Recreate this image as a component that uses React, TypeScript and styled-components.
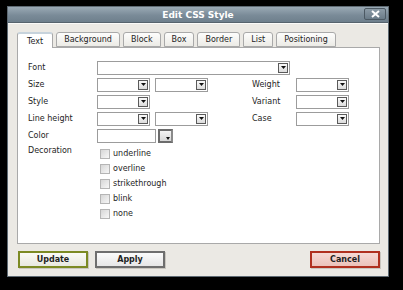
import styled, { createGlobalStyle } from "styled-components";

const GlobalStyle = createGlobalStyle`
  html, body {
    margin: 0;
    padding: 0;
    background: #000;
  }
  body {
    width: 403px;
    height: 290px;
    overflow: hidden;
    font-family: "DejaVu Sans", Verdana, sans-serif;
  }
`;

const tabs = ["Text", "Background", "Block", "Box", "Border", "List", "Positioning"];
const decorations = ["underline", "overline", "strikethrough", "blink", "none"];

export default function App() {
  return (
    <>
      <GlobalStyle />
      <Dialog>
        <TitleBar>
          <Title>Edit CSS Style</Title>
          <CloseButton>
            <svg width="9" height="8" viewBox="0 0 9 8">
              <path d="M1 1 L8 7 M8 1 L1 7" stroke="#fff" strokeWidth="2" />
            </svg>
          </CloseButton>
        </TitleBar>
        <Body>
          <TabStrip>
            {tabs.map((t, i) => (
              <Tab key={t} $active={i === 0}>
                {t}
              </Tab>
            ))}
          </TabStrip>
          <Panel>
            <Row>
              <Label>Font</Label>
              <TextField $width={193}>
                <ArrowBox />
              </TextField>
            </Row>
            <Row>
              <Label>Size</Label>
              <Controls>
                <Select />
                <Select />
              </Controls>
              <SideLabel>Weight</SideLabel>
              <Select />
            </Row>
            <Row>
              <Label>Style</Label>
              <Controls>
                <Select />
              </Controls>
              <SideLabel>Variant</SideLabel>
              <Select />
            </Row>
            <Row>
              <Label>Line height</Label>
              <Controls>
                <Select />
                <Select />
              </Controls>
              <SideLabel>Case</SideLabel>
              <Select />
            </Row>
            <Row>
              <Label>Color</Label>
              <Controls>
                <ColorField />
                <ColorPick>
                  <svg width="4" height="3" viewBox="0 0 4 3">
                    <path d="M0 0 H4 L2 3 Z" fill="#111" />
                  </svg>
                </ColorPick>
              </Controls>
            </Row>
            <DecorationRow>
              <Label>Decoration</Label>
              <CheckList>
                {decorations.map((d) => (
                  <CheckItem key={d}>
                    <Box />
                    {d}
                  </CheckItem>
                ))}
              </CheckList>
            </DecorationRow>
          </Panel>
          <ButtonBar>
            <Button $tone="green">Update</Button>
            <Button $tone="grey">Apply</Button>
            <Spacer />
            <Button $tone="red">Cancel</Button>
          </ButtonBar>
        </Body>
      </Dialog>
    </>
  );
}

function Select() {
  return (
    <SelectBox>
      <ArrowBox />
    </SelectBox>
  );
}

function ArrowBox() {
  return (
    <Arrow>
      <svg width="5" height="3" viewBox="0 0 5 3">
        <path d="M0 0 H5 L2.5 3 Z" fill="#111" />
      </svg>
    </Arrow>
  );
}

const Dialog = styled.div`
  margin: 6px 0 0 7px;
  width: 382px;
  height: 271px;
  box-sizing: border-box;
  border: 1px solid #5e6a73;
  background: #ebe9e4;
  display: flex;
  flex-direction: column;
`;

const TitleBar = styled.div`
  height: 15px;
  flex: none;
  position: relative;
  display: flex;
  align-items: center;
  justify-content: center;
  background: linear-gradient(#9aa9b5, #7a8b98 55%, #6e7f8c);
  border-bottom: 1px solid #56636d;
`;

const Title = styled.div`
  color: #fff;
  font-size: 9px;
  font-weight: bold;
`;

const CloseButton = styled.div`
  position: absolute;
  right: 2px;
  top: 1px;
  width: 22px;
  height: 12px;
  box-sizing: border-box;
  border: 1px solid #4c5963;
  border-radius: 2px;
  background: linear-gradient(#8c9ba7, #6a7b88);
  display: flex;
  align-items: center;
  justify-content: center;
`;

const Body = styled.div`
  flex: 1;
  display: flex;
  flex-direction: column;
  padding: 8px 8px 0 9px;
  border-top: 1px solid #fafaf8;
`;

const TabStrip = styled.div`
  display: flex;
  gap: 3px;
  height: 15px;
  position: relative;
  z-index: 1;
`;

const Tab = styled.div<{ $active?: boolean }>`
  height: ${(p) => (p.$active ? "16px" : "15px")};
  box-sizing: border-box;
  padding: 0 7px;
  display: flex;
  align-items: center;
  font-size: 8px;
  color: #1e1e1e;
  border: 1px solid #a9a9a9;
  border-bottom: ${(p) => (p.$active ? "none" : "1px solid #a9a9a9")};
  border-radius: 3px 3px 0 0;
  background: ${(p) => (p.$active ? "#fff" : "linear-gradient(#fdfdfc, #ecebe6)")};
  ${(p) => (p.$active ? "border-top: 2px solid #c7d3dc; padding: 0 9px;" : "")}
`;

const Panel = styled.div`
  width: 363px;
  height: 197px;
  box-sizing: border-box;
  border: 1px solid #a9a9a9;
  background: #fff;
  padding: 11px 0 0 10px;
  display: flex;
  flex-direction: column;
`;

const Row = styled.div`
  display: flex;
  align-items: center;
  height: 17px;
`;

const Label = styled.div`
  width: 69px;
  flex: none;
  font-size: 8px;
  color: #1e1e1e;
`;

const SideLabel = styled.div`
  width: 44px;
  flex: none;
  font-size: 8px;
  color: #1e1e1e;
`;

const Controls = styled.div`
  width: 155px;
  flex: none;
  display: flex;
  align-items: center;
  gap: 5px;
`;

const SelectBox = styled.div`
  width: 53px;
  height: 14px;
  box-sizing: border-box;
  border: 1px solid #9c9c9c;
  background: #fff;
  display: flex;
  justify-content: flex-end;
  align-items: center;
  padding-right: 1px;
`;

const TextField = styled(SelectBox)<{ $width: number }>`
  width: ${(p) => p.$width}px;
`;

const Arrow = styled.div`
  width: 10px;
  height: 10px;
  box-sizing: border-box;
  border: 1px solid #5a5a5a;
  background: linear-gradient(#fafafa, #dcdcdc);
  display: flex;
  align-items: center;
  justify-content: center;
`;

const ColorField = styled.div`
  width: 59px;
  height: 14px;
  box-sizing: border-box;
  border: 1px solid #9c9c9c;
  background: #fff;
`;

const ColorPick = styled.div`
  width: 15px;
  height: 14px;
  margin-left: -3px;
  box-sizing: border-box;
  border: 2px solid #6c6c6c;
  border-right-color: #8a8a8a;
  background: linear-gradient(#f4f4f4, #d8d8d8);
  display: flex;
  align-items: flex-end;
  justify-content: flex-end;
  padding: 0 1px 1px 0;
`;

const DecorationRow = styled.div`
  display: flex;
  margin-top: 2px;
`;

const CheckList = styled.div`
  display: flex;
  flex-direction: column;
  padding-left: 3px;
`;

const CheckItem = styled.div`
  display: flex;
  align-items: center;
  gap: 3px;
  height: 15px;
  font-size: 8px;
  color: #1e1e1e;
`;

const Box = styled.div`
  width: 10px;
  height: 10px;
  box-sizing: border-box;
  border: 1px solid #b5b5b5;
  background: linear-gradient(135deg, #d6d6d6, #f7f7f7);
`;

const ButtonBar = styled.div`
  display: flex;
  align-items: center;
  padding: 7px 0 0 1px;
  width: 362px;
  gap: 7px;
`;

const Spacer = styled.div`
  flex: 1;
`;

const tones = {
  green: { border: "#7c8a24", bg: "linear-gradient(#fbfbf6, #e8e8e0)" },
  grey: { border: "#6e6e6e", bg: "linear-gradient(#fbfbfb, #e6e6e6)" },
  red: { border: "#b0301f", bg: "linear-gradient(#f6dad5, #ecc2ba)" },
};

const Button = styled.div<{ $tone: "green" | "grey" | "red" }>`
  width: 70px;
  height: 17px;
  box-sizing: border-box;
  border: 2px solid ${(p) => tones[p.$tone].border};
  background: ${(p) => tones[p.$tone].bg};
  box-shadow: 1px 1px 0 #c9c6bf;
  display: flex;
  align-items: center;
  justify-content: center;
  font-size: 8px;
  font-weight: bold;
  color: #1f1f1f;
`;
